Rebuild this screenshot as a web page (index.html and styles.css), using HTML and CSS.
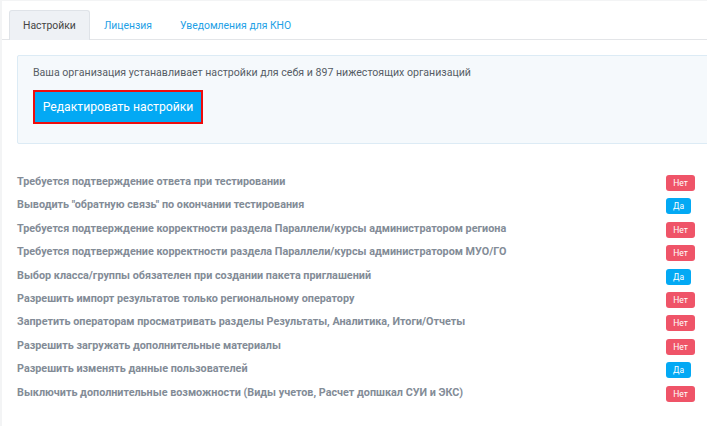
FILE: index.html
```html
<!DOCTYPE html>
<html lang="ru">
<head>
<meta charset="utf-8">
<link rel="stylesheet" href="styles.css">
</head>
<body>
<div class="page">
  <div class="tabs">
    <div class="tab active">Настройки</div>
    <div class="tab">Лицензия</div>
    <div class="tab">Уведомления для КНО</div>
  </div>
  <div class="content">
    <div class="info">
      <div class="info-text">Ваша организация устанавливает настройки для себя и 897 нижестоящих организаций</div>
      <button class="edit-btn">Редактировать настройки</button>
    </div>
    <div class="list">
      <div class="row"><span>Требуется подтверждение ответа при тестировании</span><span class="badge no">Нет</span></div>
      <div class="row"><span>Выводить "обратную связь" по окончании тестирования</span><span class="badge yes">Да</span></div>
      <div class="row"><span>Требуется подтверждение корректности раздела Параллели/курсы администратором региона</span><span class="badge no">Нет</span></div>
      <div class="row"><span>Требуется подтверждение корректности раздела Параллели/курсы администратором МУО/ГО</span><span class="badge no">Нет</span></div>
      <div class="row"><span>Выбор класса/группы обязателен при создании пакета приглашений</span><span class="badge yes">Да</span></div>
      <div class="row"><span>Разрешить импорт результатов только региональному оператору</span><span class="badge no">Нет</span></div>
      <div class="row"><span>Запретить операторам просматривать разделы Результаты, Аналитика, Итоги/Отчеты</span><span class="badge no">Нет</span></div>
      <div class="row"><span>Разрешить загружать дополнительные материалы</span><span class="badge no">Нет</span></div>
      <div class="row"><span>Разрешить изменять данные пользователей</span><span class="badge yes">Да</span></div>
      <div class="row"><span>Выключить дополнительные возможности (Виды учетов, Расчет допшкал СУИ и ЭКС)</span><span class="badge no">Нет</span></div>
    </div>
  </div>
</div>
</body>
</html>
```
FILE: styles.css
```css
html, body {
  margin: 0;
  padding: 0;
}
body {
  background: #f3f4f5;
  font-family: Roboto, "Liberation Sans", Arial, sans-serif;
  overflow: hidden;
}
.page {
  margin: 1px 0 0 2px;
  background: #fff;
  height: 425px;
}
.tabs {
  display: flex;
  padding: 9px 0 0 7px;
  border-bottom: 1px solid #e3e5e8;
  height: 29px;
}
.tab {
  padding: 0 13px;
  height: 29px;
  line-height: 29px;
  font-size: 10.4px;
  color: #1e9fe6;
  border: 1px solid transparent;
  border-bottom: none;
  border-radius: 3px 3px 0 0;
}
.tab.active {
  background: #eef1f5;
  border-color: #dfe3e8;
  color: #444;
}
.content {
  padding: 15px 12px 0 15px;
}
.info {
  margin-right: -30px;
  background: #f5f9fc;
  border: 1px solid #dcebf5;
  border-radius: 2px;
  padding: 10px 15px 17px;
  height: 60px;
}
.info-text {
  font-size: 10.6px;
  color: #555d66;
  line-height: 14px;
}
.edit-btn {
  margin-top: 10px;
  display: block;
  width: 170px;
  height: 34px;
  background: #03a9f4;
  border: 2px solid #ee0d0d;
  color: #fff;
  font-family: Roboto, "Liberation Sans", Arial, sans-serif;
  font-size: 12.2px;
  padding: 0;
  text-align: center;
}
.list {
  padding-top: 31px;
  display: flex;
  flex-direction: column;
}
.row {
  display: flex;
  justify-content: space-between;
  align-items: flex-start;
  height: 23.4px;
  font-size: 10.8px;
  font-weight: bold;
  color: #838c97;
  line-height: 14px;
}
.badge {
  margin-top: 0;
  height: 16px;
  line-height: 16px;
  border-radius: 3px;
  color: #fff;
  font-size: 8.5px;
  font-weight: normal;
  text-align: center;
}
.badge.no {
  background: #ef5468;
  width: 29px;
}
.badge.yes {
  background: #03a9f4;
  width: 25px;
  margin-right: 4px;
}
```
